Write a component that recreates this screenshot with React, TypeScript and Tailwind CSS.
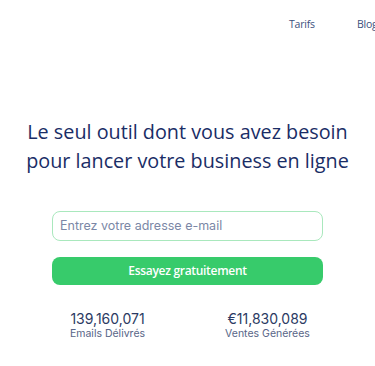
export default function App() {
  return (
    <div className="w-[375px] h-[366px] bg-white overflow-hidden font-['Open_Sans',sans-serif]">
      {/* nav */}
      <nav className="flex gap-[42px] pt-[17px] pl-[289px] text-[10.5px] tracking-[-0.2px] text-[#3c4f7c] whitespace-nowrap">
        <a className="block">Tarifs</a>
        <a className="block">Blog</a>
      </nav>

      {/* hero */}
      <h1 className="mt-[84px] text-center text-[19.8px] leading-[29px] text-[#1a2d66]">
        Le seul outil dont vous avez besoin
        <br />
        pour lancer votre business en ligne
      </h1>

      <div className="mx-auto mt-[36px] w-[271px] flex flex-col gap-[16px]">
        <input
          type="email"
          placeholder="Entrez votre adresse e-mail"
          className="h-[30px] w-full rounded-[8px] border border-[#a9e8bd] px-[7px] text-[12.5px] font-['Inter',sans-serif] text-[#1a2d66] placeholder:text-[#7b87a6] outline-none"
        />
        <button className="h-[28px] w-full rounded-[8px] bg-[#37cb6b] text-white text-[12px] font-semibold tracking-[-0.3px]">
          Essayez gratuitement
        </button>
      </div>

      {/* stats */}
      <div className="mt-[26px] grid grid-cols-2 w-[320px] mx-auto font-['Inter',sans-serif] text-center">
        <div>
          <p className="text-[14px] leading-[16px] text-[#2b3a63]">139,160,071</p>
          <p className="text-[10.5px] leading-[14px] text-[#586587]">Emails Délivrés</p>
        </div>
        <div>
          <p className="text-[14px] leading-[16px] text-[#2b3a63]">€11,830,089</p>
          <p className="text-[10.5px] leading-[14px] text-[#586587]">Ventes Générées</p>
        </div>
      </div>
    </div>
  );
}
